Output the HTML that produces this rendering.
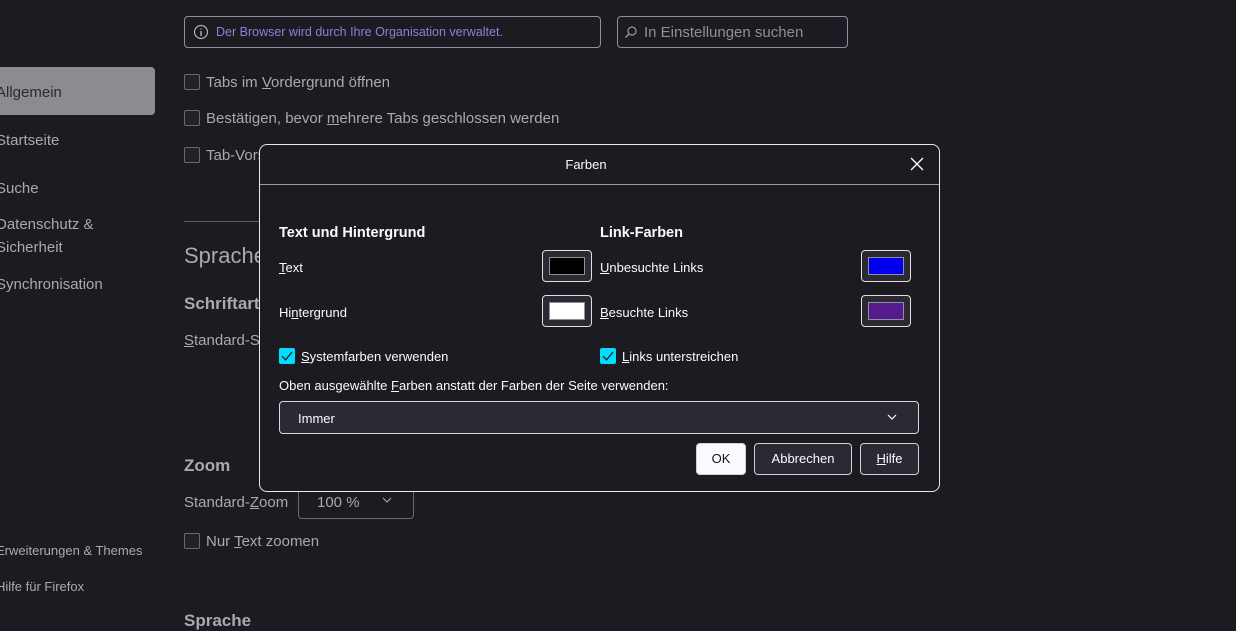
<!DOCTYPE html>
<html><head><meta charset="utf-8">
<style>
*{box-sizing:border-box;margin:0;padding:0}
body{width:1236px;height:631px;background:#1c1b22;font-family:"Segoe UI","Liberation Sans",sans-serif;color:#a9a9b0;position:relative;overflow:hidden;font-size:15px}
.a{position:absolute;white-space:nowrap}
.cb{position:absolute;width:16px;height:16px;border:1px solid #6b6a70;border-radius:2px;background:#232229}
u{text-decoration:underline}
.dlg{position:absolute;left:259px;top:144px;width:681px;height:348px;border:1px solid #e8e8ea;border-radius:8px;background:#1c1b22;color:#fbfbfe;font-size:13px}
.sw{position:absolute;width:50px;height:32px;border:1px solid #e0e0e4;border-radius:4px;background:#2b2a33}
.sw i{position:absolute;left:6px;top:6px;width:36px;height:18px;border:1px solid #8f8f9d}
.ck{position:absolute;width:16px;height:16px;background:#00ddff;border-radius:2px}
.btn{position:absolute;top:298px;height:32px;border:1px solid #d0d0d6;border-radius:4px;background:#2b2a33;color:#fbfbfe;text-align:center;line-height:30px;font-size:13px}
</style></head><body>
<div class="a" style="left:184px;top:16px;width:417px;height:32px;border:1px solid #8f8f9d;border-radius:4px"></div>
<svg class="a" style="left:193px;top:24px" width="16" height="16" viewBox="0 0 16 16"><circle cx="8" cy="8" r="6.5" fill="none" stroke="#b0b0b8" stroke-width="1.2"/><path d="M8 7v5M8 4.5v1" stroke="#b0b0b8" stroke-width="1.4"/></svg>
<div class="a" style="left:216px;top:25px;font-size:12.5px;color:#8a80d8">Der Browser wird durch Ihre Organisation verwaltet.</div>
<div class="a" style="left:617px;top:16px;width:231px;height:32px;border:1px solid #8f8f9d;border-radius:4px"></div>
<svg class="a" style="left:624px;top:25px" width="14" height="14" viewBox="0 0 14 14"><circle cx="8" cy="6" r="4" fill="none" stroke="#999" stroke-width="1.2"/><path d="M5 9L1.5 12.5" stroke="#999" stroke-width="1.3"/></svg>
<div class="a" style="left:644px;top:24px;font-size:15px;color:#8f8f96">In Einstellungen suchen</div>

<div class="a" style="left:0;top:67px;width:155px;height:48px;background:#8c8b91;border-radius:0 4px 4px 0"></div>
<div class="a" style="left:-4px;top:84px;color:#2b2a33">Allgemein</div>
<div class="a" style="left:-4px;top:132px">Startseite</div>
<div class="a" style="left:-4px;top:180px">Suche</div>
<div class="a" style="left:-4px;top:216px">Datenschutz &amp;</div>
<div class="a" style="left:-4px;top:239px">Sicherheit</div>
<div class="a" style="left:-4px;top:276px">Synchronisation</div>
<div class="a" style="left:-4px;top:543px;font-size:13px">Erweiterungen &amp; Themes</div>
<div class="a" style="left:-4px;top:579px;font-size:13px">Hilfe für Firefox</div>

<div class="cb" style="left:184px;top:74px"></div><div class="a" style="left:206px;top:74px">Tabs im <u>V</u>ordergrund öffnen</div>
<div class="cb" style="left:184px;top:110px"></div><div class="a" style="left:206px;top:110px">Bestätigen, bevor <u>m</u>ehrere Tabs geschlossen werden</div>
<div class="cb" style="left:184px;top:147px"></div><div class="a" style="left:206px;top:147px">Tab-Vorschau</div>
<div class="a" style="left:184px;top:221px;width:100px;height:1px;background:#5b5a60"></div>
<div class="a" style="left:184px;top:243px;font-size:22px;font-weight:300">Sprache</div>
<div class="a" style="left:184px;top:294px;font-size:17px;font-weight:bold">Schriftarten</div>
<div class="a" style="left:184px;top:332px"><u>S</u>tandard-S</div>
<div class="a" style="left:184px;top:456px;font-size:17px;font-weight:bold">Zoom</div>
<div class="a" style="left:184px;top:494px">Standard-<u>Z</u>oom</div>
<div class="a" style="left:298px;top:484px;width:116px;height:35px;border:1px solid #6b6a70;border-radius:4px"></div>
<div class="a" style="left:317px;top:494px">100 %</div>
<svg class="a" style="left:382px;top:496px" width="10" height="8"><path d="M1 2l4 4 4-4" fill="none" stroke="#a9a9b0" stroke-width="1"/></svg>
<div class="cb" style="left:184px;top:533px"></div><div class="a" style="left:206px;top:533px">Nur <u>T</u>ext zoomen</div>
<div class="a" style="left:184px;top:611px;font-size:17px;font-weight:bold">Sprache</div>

<div class="dlg">
<div class="a" style="left:0;width:652px;top:12px;text-align:center">Farben</div>
<svg class="a" style="left:650px;top:12px" width="14" height="14" viewBox="0 0 14 14"><path d="M1 1L13 13M13 1L1 13" stroke="#fbfbfe" stroke-width="1.4"/></svg>
<div class="a" style="left:0;top:39px;width:679px;height:1px;background:#9a9aa0"></div>
<div class="a" style="left:19px;top:80px;font-size:14.5px;font-weight:bold">Text und Hintergrund</div>
<div class="a" style="left:340px;top:80px;font-size:14.5px;font-weight:bold">Link-Farben</div>
<div class="a" style="left:19px;top:115px"><u>T</u>ext</div>
<div class="a" style="left:19px;top:160px">Hi<u>n</u>tergrund</div>
<div class="a" style="left:340px;top:115px"><u>U</u>nbesuchte Links</div>
<div class="a" style="left:340px;top:160px"><u>B</u>esuchte Links</div>
<div class="sw" style="left:282px;top:105px"><i style="background:#000"></i></div>
<div class="sw" style="left:282px;top:150px"><i style="background:#fff"></i></div>
<div class="sw" style="left:601px;top:105px"><i style="background:#0000ee"></i></div>
<div class="sw" style="left:601px;top:150px"><i style="background:#551a8b"></i></div>
<div class="ck" style="left:19px;top:203px"><svg width="16" height="16"><path d="M3 8l3.5 4L13 4" fill="none" stroke="#1c1b22" stroke-width="1.3"/></svg></div>
<div class="a" style="left:41px;top:204px"><u>S</u>ystemfarben verwenden</div>
<div class="ck" style="left:340px;top:203px"><svg width="16" height="16"><path d="M3 8l3.5 4L13 4" fill="none" stroke="#1c1b22" stroke-width="1.3"/></svg></div>
<div class="a" style="left:362px;top:204px"><u>L</u>inks unterstreichen</div>
<div class="a" style="left:19px;top:233px">Oben ausgewählte <u>F</u>arben anstatt der Farben der Seite verwenden:</div>
<div class="a" style="left:19px;top:256px;width:640px;height:33px;border:1px solid #d8d8dc;border-radius:4px;background:#2b2a33"></div>
<div class="a" style="left:38px;top:266px">Immer</div>
<svg class="a" style="left:626px;top:267px" width="12" height="10"><path d="M2 3l4 4 4-4" fill="none" stroke="#fbfbfe" stroke-width="1.2"/></svg>
<div class="btn" style="left:436px;width:50px;background:#fbfbfe;color:#15141a">OK</div>
<div class="btn" style="left:494px;width:98px">Abbrechen</div>
<div class="btn" style="left:600px;width:59px"><u>H</u>ilfe</div>
</div>
</body></html>
